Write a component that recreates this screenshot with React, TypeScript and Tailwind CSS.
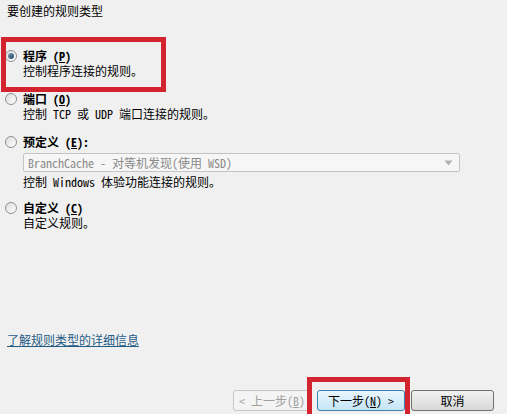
import React from "react";

const font = {
  fontFamily: '"Noto Sans Mono CJK SC", "Noto Sans CJK SC", "Liberation Mono", monospace',
};

function Radio({ checked }: { checked?: boolean }) {
  return (
    <span className="w-[12px] h-[12px] rounded-full border border-[#8f8f8f] bg-gradient-to-br from-[#dcdcdc] to-[#ffffff] flex items-center justify-center shrink-0">
      {checked && (
        <span className="w-[6px] h-[6px] rounded-full bg-gradient-to-br from-[#7fa3bd] to-[#1e3f5a]" />
      )}
    </span>
  );
}

// text with one underlined access key, laid out as sibling spans
function Keyed({ before, k, after }: { before: string; k: string; after: string }) {
  return (
    <span className="inline-flex whitespace-pre">
      <span>{before}</span>
      <span className="underline">{k}</span>
      <span>{after}</span>
    </span>
  );
}

function Option({
  label,
  accessKey,
  suffix = "",
  desc,
  checked,
  children,
  className,
}: {
  label: string;
  accessKey: string;
  suffix?: string;
  desc: string;
  checked?: boolean;
  children?: React.ReactNode;
  className?: string;
}) {
  return (
    <div className={className}>
      <div className="flex items-center h-[15px]">
        <div className="w-[23px] pl-[5px]">
          <Radio checked={checked} />
        </div>
        <span className="font-bold leading-[15px] text-[#000]">
          <Keyed before={label + " ("} k={accessKey} after={")" + suffix} />
        </span>
      </div>
      {children}
      <div className="pl-[23px] leading-[15px] h-[15px]">{desc}</div>
    </div>
  );
}

export default function App() {
  return (
    <div
      className="relative w-[507px] h-[414px] bg-[#f0f0f0] text-[12px] text-black overflow-hidden flex flex-col"
      style={font}
    >
      <div className="pl-[7px] pt-[3px] h-[18px] leading-[15px]">要创建的规则类型</div>

      <Option className="mt-[30px]" label="程序" accessKey="P" desc="控制程序连接的规则。" checked />
      <Option className="mt-[13px]" label="端口" accessKey="O" desc="控制 TCP 或 UDP 端口连接的规则。" />
      <Option className="mt-[13px]" label="预定义" accessKey="E" suffix=":" desc="控制 Windows 体验功能连接的规则。">
        <div className="ml-[23px] mr-[47px] mt-[4px] mb-[2px] h-[19px] border border-[#c4c4c4] rounded-[2px] bg-[#f6f6f6] flex items-center justify-between pl-[4px] pr-[6px] text-[#8a8a8a]">
          <span className="leading-[15px]">BranchCache - 对等机发现(使用 WSD)</span>
          <svg width="9" height="6" viewBox="0 0 9 6">
            <path d="M0.5 0.5 L8.5 0.5 L4.5 5.5 Z" fill="#b0b0b0" />
          </svg>
        </div>
      </Option>
      <Option className="mt-[11px]" label="自定义" accessKey="C" desc="自定义规则。" />

      <div className="mt-[101px] pl-[7px]">
        <a href="#" className="underline text-[#1f5b85] leading-[15px]">
          了解规则类型的详细信息
        </a>
      </div>

      <div className="mt-auto mb-[3px] flex justify-end gap-[6px] pr-[13px]">
        <button className="w-[78px] h-[21px] rounded-[3px] border border-[#c6c6c6] bg-[#f4f4f4] text-[#a0a0a0] leading-[15px]">
          <Keyed before="< 上一步(" k="B" after=")" />
        </button>
        <button className="w-[88px] h-[21px] rounded-[3px] border border-[#3c7fb1] bg-gradient-to-b from-[#eaf6fd] to-[#c4e5f6] text-black leading-[15px]">
          <Keyed before="下一步(" k="N" after=") >" />
        </button>
        <button className="w-[83px] h-[21px] rounded-[3px] border border-[#707070] bg-gradient-to-b from-[#f2f2f2] to-[#d8d8d8] text-black leading-[15px]">
          取消
        </button>
      </div>

      <div className="absolute left-[1px] top-[37px] w-[165px] h-[55px] border-[5px] border-[#d3232e] pointer-events-none" />
      <div className="absolute left-[307px] top-[377px] w-[103px] h-[45px] border-[5px] border-[#d3232e] pointer-events-none" />
    </div>
  );
}
